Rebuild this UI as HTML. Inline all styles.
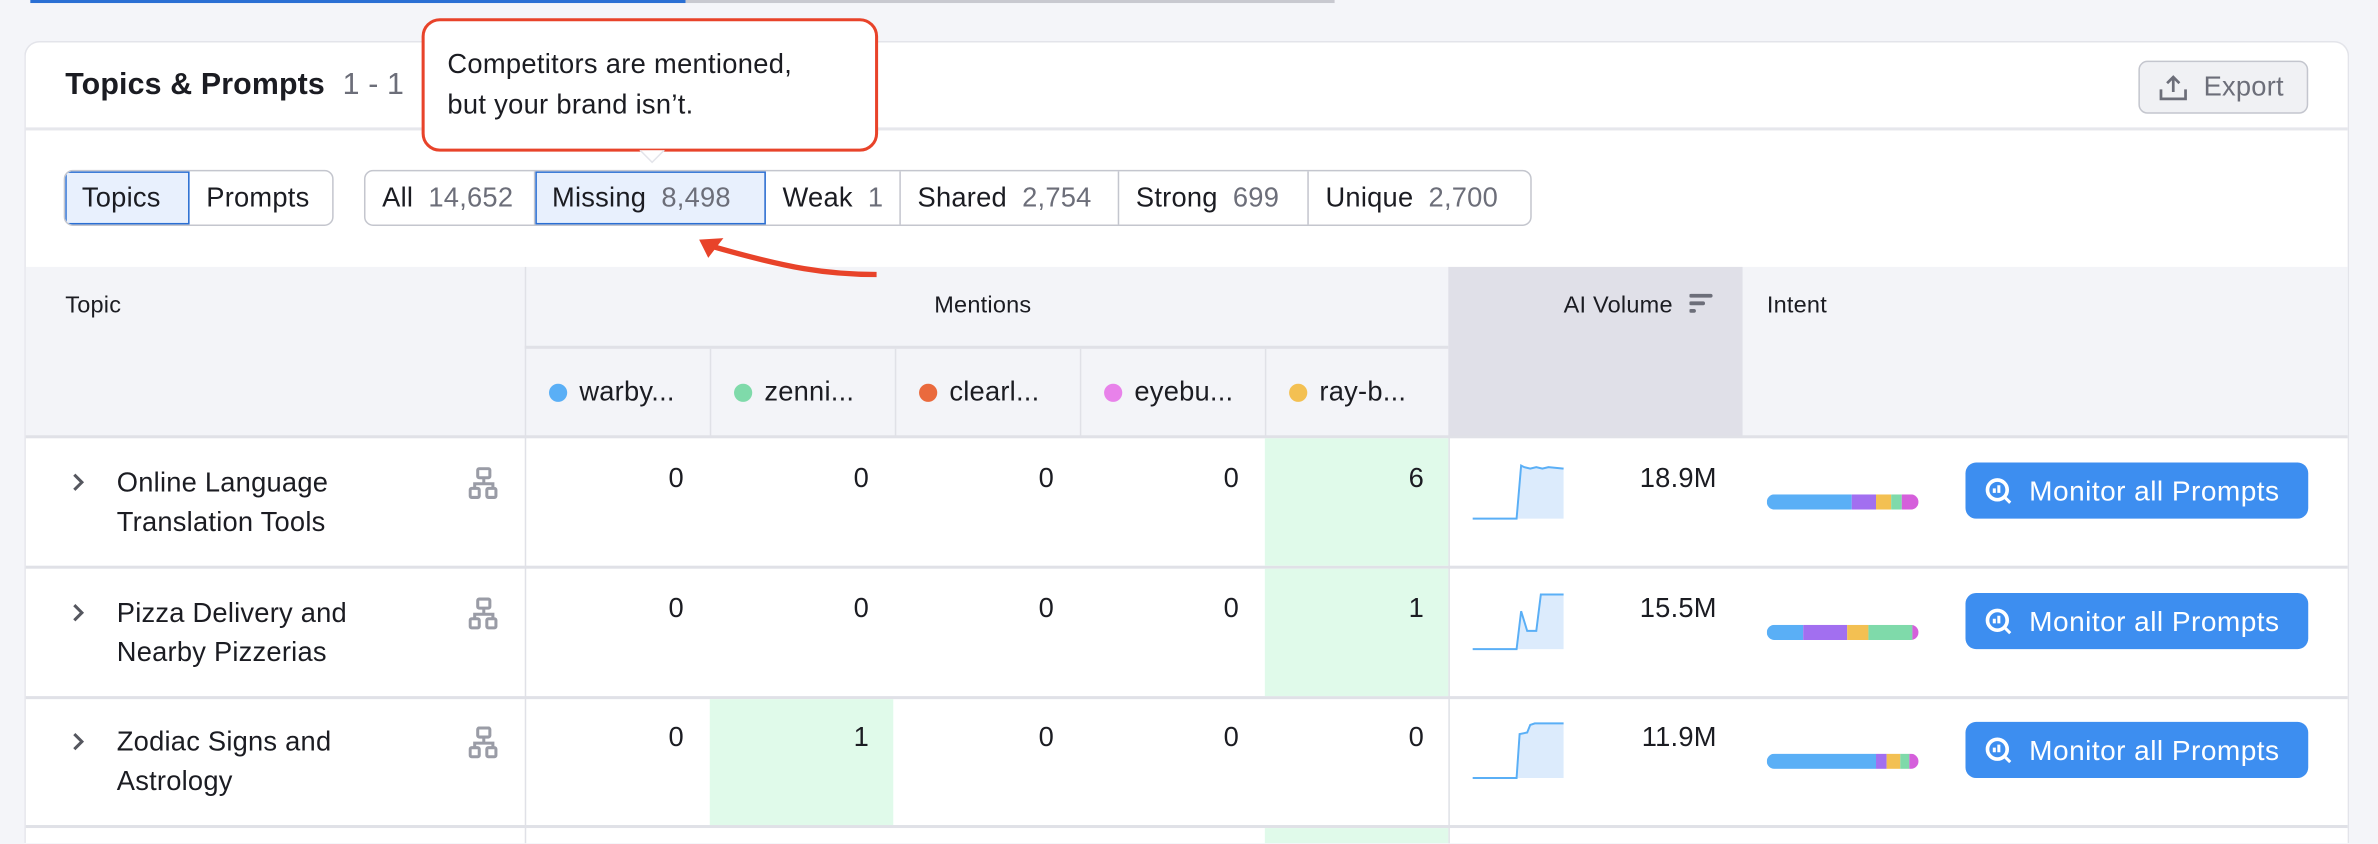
<!DOCTYPE html>
<html><head><meta charset="utf-8"><style>
*{box-sizing:border-box;margin:0;padding:0}
html,body{width:2378px;height:844px;overflow:hidden;background:#f4f5f9}
#w{position:absolute;left:0;top:0;width:1568px;height:556px;overflow:hidden;transform:scale(1.51658);transform-origin:0 0;font-family:"Liberation Sans",sans-serif;color:#1b1c22;font-size:18px;letter-spacing:.15px}
.a{position:absolute}
.card{left:16px;top:27px;width:1533px;height:529px;background:#fff;border:1px solid #e3e4ea;border-bottom:none;border-radius:10px 10px 0 0}
.seg{border:1px solid #c4c6ce;border-radius:6px;display:flex;height:37px;overflow:hidden;background:#fff}
.seg div{display:flex;align-items:center;padding:0 11px;border-right:1px solid #c4c6ce;white-space:nowrap;flex:none}
.seg div:last-child{border-right:none}
.seg .on{background:#e8f0fd;outline:1px solid #2a6fd4;outline-offset:-1px}
.g{color:#6c6e79;margin-left:10px}
.hd{background:#f3f4f8}
.vl{width:1px;background:#e0e1e7}
.hl{height:2px;background:#e0e1e7}
.num{text-align:right}
.dot{display:inline-block;width:12px;height:12px;border-radius:50%;margin-right:8px;vertical-align:-1px}
.btn{background:#3d8ef0;color:#fff;border-radius:7px;width:226px;height:37px;display:flex;align-items:center;padding-left:12px;font-size:18.5px;letter-spacing:.3px}
.grn{background:#e0faea}
</style></head><body><div id="w">
<div class="a" style="left:20px;top:0;width:432px;height:2px;background:#2a6fd4"></div>
<div class="a" style="left:452px;top:0;width:428px;height:2px;background:#c8c9d0"></div>
<div class="a card"></div>
<div class="a" style="left:43px;top:45px;font-size:20px;font-weight:bold;letter-spacing:.1px">Topics &amp; Prompts <span style="font-weight:normal;color:#6c6e79;margin-left:6px">1 - 1</span></div>
<div class="a" style="left:1410px;top:40px;width:112px;height:35px;border:1px solid #c4c6ce;border-radius:6px;background:#f0f1f4;color:#6c6e79;display:flex;align-items:center;padding-left:12px;font-size:18px">
<svg width="20" height="18" viewBox="0 0 22 20" style="margin-right:10px"><path d="M11 13V2M6.5 6.5L11 2l4.5 4.5M2 11v7h18v-7" fill="none" stroke="#6c6e79" stroke-width="2"/></svg>Export</div>
<div class="a" style="left:17px;top:84px;width:1531px;height:2px;background:#e6e7ec"></div>
<div class="a seg" style="left:42px;top:112px"><div class="on" style="width:82px">Topics</div><div style="width:94px">Prompts</div></div>
<div class="a seg" style="left:240px;top:112px"><div style="width:112px">All<span class="g">14,652</span></div><div class="on" style="width:152px">Missing<span class="g">8,498</span></div><div style="width:89px">Weak<span class="g">1</span></div><div style="width:144px">Shared<span class="g">2,754</span></div><div style="width:125px">Strong<span class="g">699</span></div><div style="width:146px">Unique<span class="g">2,700</span></div></div>
<div class="a hd" style="left:17px;top:176px;width:1531px;height:112px"></div>
<div class="a" style="left:955px;top:176px;width:194px;height:112px;background:#e0e0e8"></div>
<div class="a vl" style="left:346px;top:176px;height:381px"></div>
<div class="a vl" style="left:955px;top:288px;height:269px"></div>
<div class="a" style="left:346px;top:228px;width:609px;height:2px;background:#e0e1e7"></div>
<div class="a vl" style="left:468px;top:230px;height:58px"></div>
<div class="a vl" style="left:590px;top:230px;height:58px"></div>
<div class="a vl" style="left:712px;top:230px;height:58px"></div>
<div class="a vl" style="left:834px;top:230px;height:58px"></div>
<div class="a" style="left:43px;top:193px;font-size:15.5px">Topic</div>
<div class="a" style="left:616px;top:193px;font-size:15.5px">Mentions</div>
<div class="a" style="left:1031px;top:193px;font-size:15.5px">AI Volume</div>
<svg class="a" style="left:1114px;top:193px" width="16" height="16"><path d="M1 2h13M1 7h8M1 12h2" stroke="#6c6e79" stroke-width="2.5" stroke-linecap="round"/></svg>
<div class="a" style="left:1165px;top:193px;font-size:15.5px">Intent</div>
<div class="a" style="left:362px;top:248px"><span class="dot" style="background:#5aaff6"></span>warby...</div>
<div class="a" style="left:484px;top:248px"><span class="dot" style="background:#7fdaaa"></span>zenni...</div>
<div class="a" style="left:606px;top:248px"><span class="dot" style="background:#ea6a3d"></span>clearl...</div>
<div class="a" style="left:728px;top:248px"><span class="dot" style="background:#e882ea"></span>eyebu...</div>
<div class="a" style="left:850px;top:248px"><span class="dot" style="background:#f3c052"></span>ray-b...</div>
<div class="a hl" style="left:17px;top:287px;width:1531px"></div>
<div class="a hl" style="left:17px;top:373px;width:1531px"></div>
<div class="a hl" style="left:17px;top:459px;width:1531px"></div>
<div class="a hl" style="left:17px;top:544px;width:1531px"></div>
<div class="a grn" style="left:834px;top:289px;width:121px;height:84px"></div>
<div class="a grn" style="left:834px;top:375px;width:121px;height:84px"></div>
<div class="a grn" style="left:468px;top:461px;width:121px;height:83px"></div>
<div class="a grn" style="left:834px;top:546px;width:121px;height:10px"></div>
<div id="rows"></div>
<script>
var R=[["Online Language","Translation Tools",[0,0,0,0,6],"18.9M",305,[[0,56,"#5aaff6"],[56,72,"#a26ff0"],[72,82,"#f3c052"],[82,89,"#7fdaaa"],[89,100,"#d55fdb"]],"M0 37H29L32 2 34 3 38 4 42 3 46 4 50 3 60 4"],
["Pizza Delivery and","Nearby Pizzerias",[0,0,0,0,1],"15.5M",391,[[0,24,"#5aaff6"],[24,53,"#a26ff0"],[53,67,"#f3c052"],[67,96,"#7fdaaa"],[96,100,"#d55fdb"]],"M0 37H29L32 12 36 25 42 25 45 1 60 1"],
["Zodiac Signs and","Astrology",[0,1,0,0,0],"11.9M",476,[[0,72,"#5aaff6"],[72,79,"#a26ff0"],[79,88,"#f3c052"],[88,94,"#7fdaaa"],[94,100,"#d55fdb"]],"M0 37H29L31 8 36 7 38 2 41 1 60 1"]];
var h="";R.forEach(function(r){var y=r[4];
h+='<svg class="a" style="left:46px;top:'+(y+6)+'px" width="10" height="14"><path d="M3 2l5 5-5 5" fill="none" stroke="#55575f" stroke-width="2"/></svg>';
h+='<div class="a" style="left:77px;top:'+(y)+'px;line-height:26px">'+r[0]+'<br>'+r[1]+'</div>';
h+='<svg class="a" style="left:309px;top:'+(y+3)+'px" width="20" height="22" viewBox="0 0 20 22"><g fill="none" stroke="#9a9ca6" stroke-width="2"><rect x="6" y="1" width="8" height="6" rx="1"/><rect x="1" y="14" width="6" height="6" rx="1"/><rect x="12" y="14" width="6" height="6" rx="1"/><path d="M10 7v3M4 14v-3h12v3"/></g></svg>';
for(var i=0;i<5;i++)h+='<div class="a num" style="left:'+(350+i*122)+'px;width:101px;top:'+(y)+'px">'+r[2][i]+'</div>';
var fillD=r[6].replace("M0 37H29","M29 37")+" V37Z";
h+='<svg class="a" style="left:971px;top:'+(y)+'px" width="62" height="40"><path d="'+fillD+'" fill="#dcebfc"/><path d="'+r[6]+'" fill="none" stroke="#5aaff6" stroke-width="1.3"/></svg>';
h+='<div class="a num" style="left:1040px;width:92px;top:'+(y)+'px">'+r[3]+'</div>';
var b='';r[5].forEach(function(s){b+='<div style="position:absolute;left:'+s[0]+'%;width:'+(s[1]-s[0])+'%;top:0;height:100%;background:'+s[2]+'"></div>'});
h+='<div class="a" style="left:1165px;top:'+(y+21)+'px;width:100px;height:10px;border-radius:5px;overflow:hidden">'+b+'</div>';
h+='<div class="a btn" style="left:1296px;top:'+(y)+'px"><svg width="20" height="20" viewBox="0 0 20 20" style="margin-right:10px"><circle cx="9" cy="9" r="6.5" fill="none" stroke="#fff" stroke-width="2.4"/><path d="M13.5 13.5l4 4M7 8v3M10 6v5" stroke="#fff" stroke-width="2"/></svg>Monitor all Prompts</div>';
});
document.getElementById("rows").innerHTML=h;
</script>
<div class="a" style="left:278px;top:12px;width:301px;height:88px;background:#fff;border:2.5px solid #e8432a;border-radius:12px;padding:15px 15px;font-size:18px;line-height:27px;letter-spacing:.2px">Competitors are mentioned,<br>but your brand isn’t.</div>
<svg class="a" style="left:420px;top:99px" width="20" height="10"><path d="M2 0l8 8 8-8" fill="#fff" stroke="#e3e4ea"/></svg>
<svg class="a" style="left:450px;top:150px" width="135" height="40"><path d="M128 31C95 31 70 27 18 12" fill="none" stroke="#e8432a" stroke-width="3.5"/><path d="M11 8l16 -1-10 13z" fill="#e8432a"/></svg>
</div>
</body></html>
